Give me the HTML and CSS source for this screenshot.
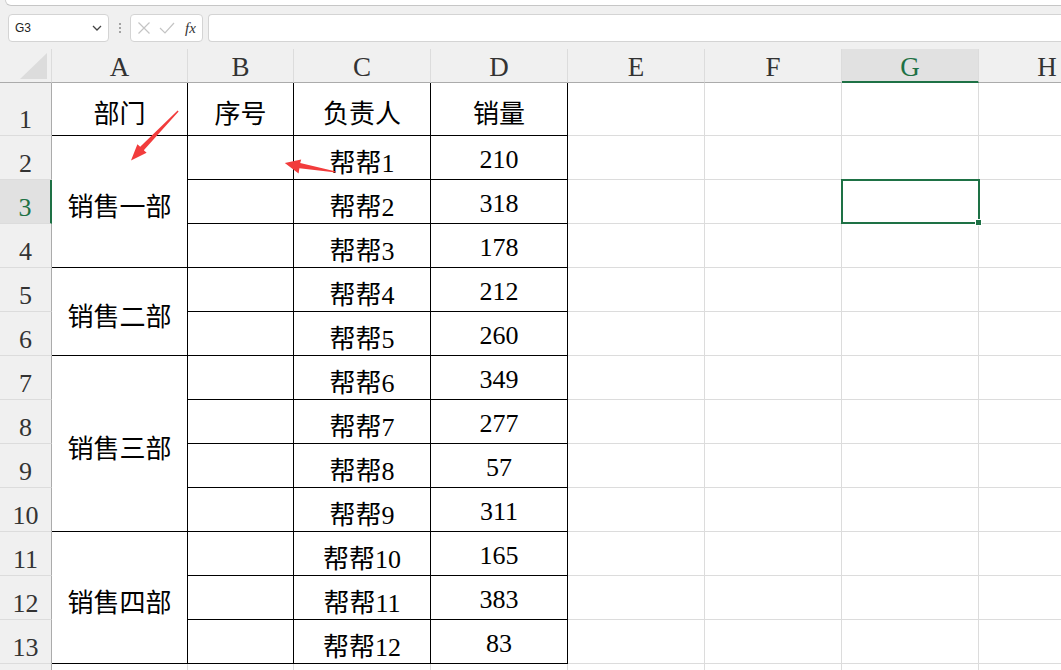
FILE: index.html
```html
<!DOCTYPE html>
<html lang="zh">
<head>
<meta charset="utf-8">
<link rel="stylesheet" href="styles.css">
</head>
<body>
<div class="topstrip"></div>
<div class="fbar">
  <div class="namebox">
    <span class="nb-text">G3</span>
    <svg class="chev" width="10" height="6" viewBox="0 0 10 6"><path d="M1 1 L5 5 L9 1" fill="none" stroke="#444" stroke-width="1.3"/></svg>
  </div>
  <div class="dots"><span></span><span></span><span></span></div>
  <div class="fxbox">
    <svg width="14" height="14" viewBox="0 0 14 14"><path d="M1.5 1.5 L12.5 12.5 M12.5 1.5 L1.5 12.5" stroke="#c4c4c4" stroke-width="1.2" fill="none"/></svg>
    <svg width="16" height="14" viewBox="0 0 16 14"><path d="M1 7 L6 12 L15 2" stroke="#c4c4c4" stroke-width="1.2" fill="none"/></svg>
    <span class="fx">fx</span>
  </div>
  <div class="finput"></div>
</div>

<div class="sheet">
  <div class="corner"><div class="tri"></div></div>
  <div class="ch">A</div><div class="ch">B</div><div class="ch">C</div><div class="ch">D</div><div class="ch">E</div><div class="ch">F</div><div class="ch sel">G</div><div class="ch">H</div>

  <div class="rh r1">1</div>
  <div class="c t">部门</div><div class="c t">序号</div><div class="c t">负责人</div><div class="c t">销量</div><div class="c"></div><div class="c"></div><div class="c"></div><div class="c"></div>

  <div class="rh">2</div>
  <div class="c t m3">销售一部</div><div class="c t"></div><div class="c t">帮帮1</div><div class="c t">210</div><div class="c"></div><div class="c"></div><div class="c"></div><div class="c"></div>

  <div class="rh sel">3</div>
  <div class="c t"></div><div class="c t">帮帮2</div><div class="c t">318</div><div class="c"></div><div class="c"></div><div class="c active"><span class="handle"></span></div><div class="c"></div>

  <div class="rh">4</div>
  <div class="c t"></div><div class="c t">帮帮3</div><div class="c t">178</div><div class="c"></div><div class="c"></div><div class="c"></div><div class="c"></div>

  <div class="rh">5</div>
  <div class="c t m2">销售二部</div><div class="c t"></div><div class="c t">帮帮4</div><div class="c t">212</div><div class="c"></div><div class="c"></div><div class="c"></div><div class="c"></div>

  <div class="rh">6</div>
  <div class="c t"></div><div class="c t">帮帮5</div><div class="c t">260</div><div class="c"></div><div class="c"></div><div class="c"></div><div class="c"></div>

  <div class="rh">7</div>
  <div class="c t m4">销售三部</div><div class="c t"></div><div class="c t">帮帮6</div><div class="c t">349</div><div class="c"></div><div class="c"></div><div class="c"></div><div class="c"></div>

  <div class="rh">8</div>
  <div class="c t"></div><div class="c t">帮帮7</div><div class="c t">277</div><div class="c"></div><div class="c"></div><div class="c"></div><div class="c"></div>

  <div class="rh">9</div>
  <div class="c t"></div><div class="c t">帮帮8</div><div class="c t">57</div><div class="c"></div><div class="c"></div><div class="c"></div><div class="c"></div>

  <div class="rh">10</div>
  <div class="c t"></div><div class="c t">帮帮9</div><div class="c t">311</div><div class="c"></div><div class="c"></div><div class="c"></div><div class="c"></div>

  <div class="rh">11</div>
  <div class="c t m3">销售四部</div><div class="c t"></div><div class="c t">帮帮10</div><div class="c t">165</div><div class="c"></div><div class="c"></div><div class="c"></div><div class="c"></div>

  <div class="rh">12</div>
  <div class="c t"></div><div class="c t">帮帮11</div><div class="c t">383</div><div class="c"></div><div class="c"></div><div class="c"></div><div class="c"></div>

  <div class="rh">13</div>
  <div class="c t"></div><div class="c t">帮帮12</div><div class="c t">83</div><div class="c"></div><div class="c"></div><div class="c"></div><div class="c"></div>

  <div class="rh"></div>
  <div class="c"></div><div class="c"></div><div class="c"></div><div class="c"></div><div class="c"></div><div class="c"></div><div class="c"></div><div class="c"></div>
</div>

<svg class="arrows" width="1061" height="670" viewBox="0 0 1061 670">
  <polygon points="178.6,111.4 143.8,150.2 146.6,152.8 131,160.5 137.4,144.2 140.2,146.8 177.6,110.6" fill="#f23c3c"/>
  <polygon points="336,172.6 299.4,168.2 298.6,173.4 284.8,163 301.2,159.4 300.2,163.1 336,171.4" fill="#f23c3c"/>
</svg>
</body>
</html>
```

FILE: styles.css
```css
html, body {
  margin: 0;
  padding: 0;
}
body {
  width: 1061px;
  height: 670px;
  overflow: hidden;
  position: relative;
  background: #f0f0f0;
  font-family: "Liberation Serif", "Noto Sans CJK SC", serif;
}

.topstrip {
  height: 5px;
  margin-left: 5px;
  background: #fff;
  border-left: 1px solid #cfcfcf;
  border-bottom: 1px solid #c6c6c6;
  border-bottom-left-radius: 6px;
}

.fbar {
  display: flex;
  align-items: center;
  height: 28px;
  margin: 8px 0 7px 8px;
}
.namebox {
  box-sizing: border-box;
  width: 101px;
  height: 28px;
  background: #fff;
  border: 1px solid #d4d4d4;
  border-radius: 4px;
  display: flex;
  align-items: center;
  justify-content: space-between;
  padding: 0 6px 0 6px;
}
.nb-text {
  font-family: "Liberation Sans", Arial, sans-serif;
  font-size: 12px;
  color: #222;
}
.dots {
  width: 21px;
  display: flex;
  flex-direction: column;
  align-items: center;
  gap: 2px;
}
.dots span {
  width: 2px;
  height: 2px;
  background: #8a8a8a;
  border-radius: 1px;
}
.fxbox {
  box-sizing: border-box;
  width: 73px;
  height: 28px;
  background: #fff;
  border: 1px solid #d4d4d4;
  border-radius: 4px;
  display: flex;
  align-items: center;
  gap: 8px;
  padding-left: 6px;
}
.fx {
  font-family: "Liberation Serif", serif;
  font-style: italic;
  font-size: 15px;
  color: #333;
  margin-left: 2px;
}
.finput {
  box-sizing: border-box;
  flex: 1;
  margin-left: 5px;
  height: 28px;
  background: #fff;
  border: 1px solid #d4d4d4;
  border-right: none;
  border-radius: 4px 0 0 4px;
}

.sheet {
  display: grid;
  grid-template-columns: 52px 136px 106px 137px 137px 137px 137px 137px 137px;
  grid-template-rows: 34px 53px repeat(13, 44px);
  background: #fff;
}

.corner {
  box-sizing: border-box;
  background: #f0f0f0;
  border-right: 1px solid #dcdcdc;
  border-bottom: 1px solid #ababab;
  position: relative;
}
.tri {
  position: absolute;
  right: 4px;
  bottom: 3px;
  width: 0;
  height: 0;
  border-left: 27px solid transparent;
  border-bottom: 26px solid #dcdcdc;
}

.ch {
  box-sizing: border-box;
  background: #f0f0f0;
  border-right: 1px solid #dcdcdc;
  border-bottom: 1px solid #ababab;
  display: flex;
  align-items: center;
  justify-content: center;
  font-size: 27px;
  color: #333;
  padding-top: 4px;
}
.ch.sel {
  background: #e1e1e1;
  border-bottom: 2px solid #1e7145;
  color: #1e7145;
  padding-top: 5px;
}

.rh {
  box-sizing: border-box;
  background: #f0f0f0;
  border-right: 1px solid #ababab;
  border-bottom: 1px solid #dcdcdc;
  display: flex;
  align-items: flex-end;
  justify-content: center;
  font-size: 26px;
  color: #333;
  padding-bottom: 0;
  line-height: 1.1;
}
.rh.sel {
  background: #e1e1e1;
  border-right: 2px solid #1e7145;
  color: #1e7145;
}

.c {
  box-sizing: border-box;
  border-right: 1px solid #dcdcdc;
  border-bottom: 1px solid #dcdcdc;
  display: flex;
  align-items: center;
  justify-content: center;
  font-size: 26px;
  color: #000;
  padding-top: 5px;
  white-space: nowrap;
}
.c.t {
  border-right-color: #000;
  border-bottom-color: #000;
}
.m2 { grid-row: span 2; }
.m3 { grid-row: span 3; }
.m4 { grid-row: span 4; }

.c.active {
  position: relative;
}
.c.active::after {
  content: "";
  position: absolute;
  left: -1px;
  top: -1px;
  right: -2px;
  bottom: -1px;
  border: 2px solid #1e7145;
}
.handle {
  position: absolute;
  right: -4px;
  bottom: -3px;
  width: 5px;
  height: 5px;
  background: #1e7145;
  border: 1px solid #fff;
  z-index: 2;
}

.arrows {
  position: absolute;
  left: 0;
  top: 0;
  pointer-events: none;
}
```
